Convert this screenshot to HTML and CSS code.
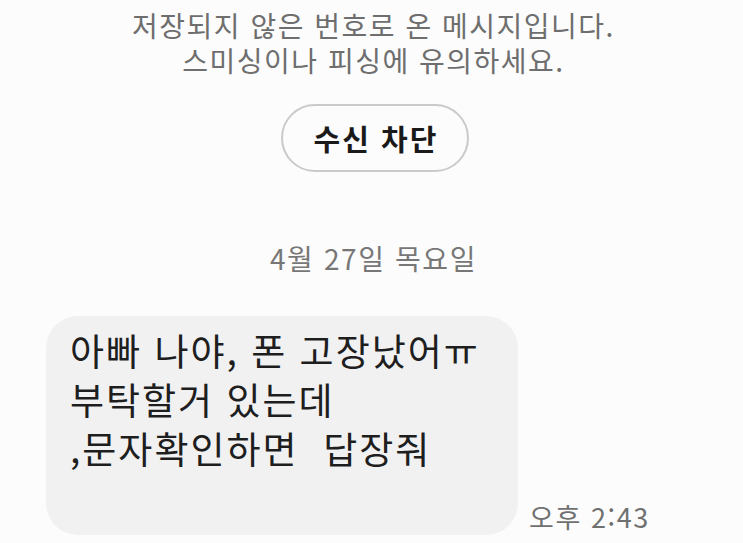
FILE: index.html
```html
<!DOCTYPE html>
<html lang="ko">
<head>
<meta charset="utf-8">
<link rel="stylesheet" href="styles.css">
</head>
<body>
<div class="screen">
  <div class="notice">
    <p class="notice-line">저장되지 않은 번호로 온 메시지입니다.</p>
    <p class="notice-line">스미싱이나 피싱에 유의하세요.</p>
  </div>
  <div class="block-row">
    <button class="block-btn">수신 차단</button>
  </div>
  <div class="date">4월 27일 목요일</div>
  <div class="msg-row">
    <div class="bubble">
      <p class="bubble-line">아빠 나야, 폰 고장났어ㅠ</p>
      <p class="bubble-line">부탁할거 있는데</p>
      <p class="bubble-line">,문자확인하면&nbsp;&nbsp;답장줘</p>
    </div>
    <div class="time">오후 2:43</div>
  </div>
</div>
</body>
</html>
```

FILE: styles.css
```css
html, body {
  margin: 0;
  padding: 0;
  background: #fcfcfc;
}
body {
  font-family: "Noto Sans CJK KR", "Noto Sans", sans-serif;
  width: 743px;
  height: 543px;
  overflow: hidden;
}
.screen {
  display: flex;
  flex-direction: column;
  padding-top: 8px;
}
.notice {
  text-align: center;
  color: #6e6e6e;
  font-size: 28px;
  line-height: 35px;
  letter-spacing: 1.5px;
  padding-left: 4px;
}
.notice-line {
  margin: 0;
}
.block-row {
  display: flex;
  justify-content: center;
  margin-top: 26px;
  padding-left: 7px;
}
.block-btn {
  width: 188px;
  height: 68px;
  border: 2px solid #cacaca;
  border-radius: 34px;
  background: #fcfcfc;
  font-family: inherit;
  font-size: 29px;
  font-weight: 700;
  letter-spacing: 2px;
  color: #1a1a1a;
  padding: 0 0 0 2px;
}
.date {
  text-align: center;
  color: #777777;
  font-size: 28px;
  line-height: 36px;
  letter-spacing: 1.6px;
  margin-top: 68px;
  padding-left: 4px;
}
.msg-row {
  display: flex;
  align-items: flex-end;
  margin-top: 40px;
  padding-left: 46px;
  gap: 11px;
}
.bubble {
  width: 472px;
  height: 219px;
  box-sizing: border-box;
  background: #f1f1f1;
  border-radius: 32px;
  padding: 10px 16px 0 24px;
  color: #1e1e1e;
  font-size: 37px;
  line-height: 49px;
  letter-spacing: 2px;
}
.bubble-line {
  margin: 0;
  white-space: nowrap;
}
.time {
  color: #707070;
  font-size: 27px;
  line-height: 36px;
  letter-spacing: 1.6px;
  margin-bottom: 0;
}
```
